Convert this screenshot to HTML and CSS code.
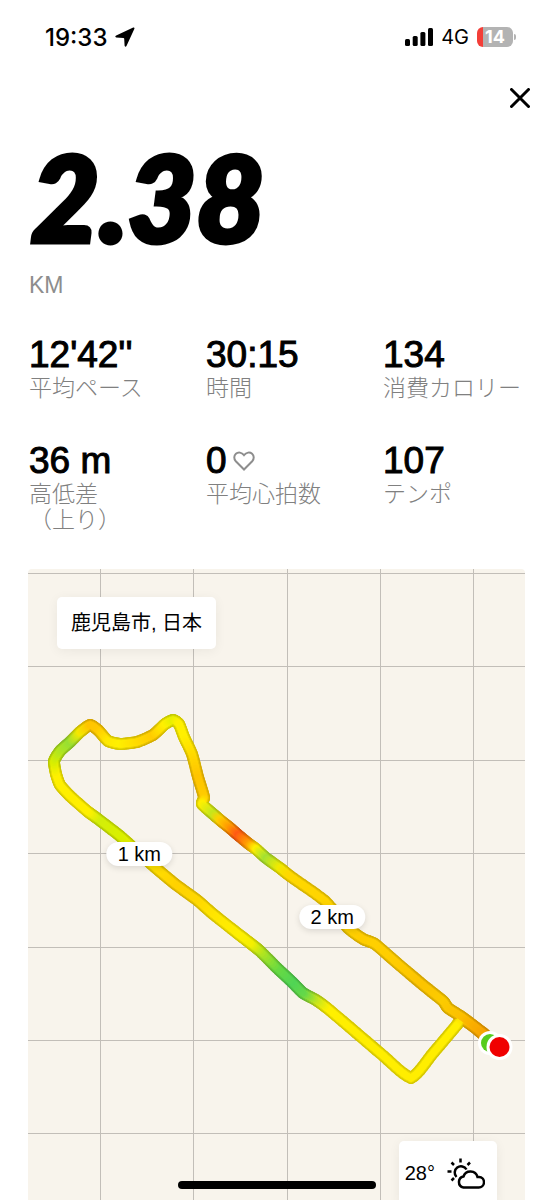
FILE: index.html
```html
<!DOCTYPE html>
<html lang="ja">
<head>
  <meta charset="UTF-8">
  <meta name="viewport" content="width=device-width, initial-scale=1.0">
  <title>2.38 KM</title>
  <link rel="stylesheet" href="styles.css">
</head>
<body>

  <div class="status-bar">
    <div class="status-group">
      <span class="clock">19:33</span>
      <svg class="location" viewBox="0 0 20 20" width="20" height="20" aria-hidden="true">
        <path d="M18.2 0.6 L1.2 8.4 Q-0.6 9.6 1.2 10.6 L8.4 11 Q9.200 11.1 9.200 11.8 L9.6 18.8 Q10.4 20.6 11.6 18.8 L19.4 1.8 Q19.8 0.2 18.2 0.6 Z"/>
      </svg>
    </div>
    <div class="status-group">
      <svg viewBox="0 0 28 18" width="28" height="18" aria-hidden="true">
        <rect x="0" y="11" width="5" height="7" rx="1.5"/>
        <rect x="7.700" y="8" width="5" height="10" rx="1.5"/>
        <rect x="15.400" y="4" width="5" height="14" rx="1.5"/>
        <rect x="23" y="0" width="5" height="18" rx="1.5"/>
      </svg>
      <span class="network">4G</span>
      <span class="battery">14</span>
    </div>
  </div>

  <header class="top-bar">
    <button class="close" aria-label="閉じる">
      <svg viewBox="0 0 20 20" width="20" height="20" aria-hidden="true">
        <path d="M1.500 1.500 L18.500 18.500 M18.500 1.500 L1.500 18.500"/>
      </svg>
    </button>
  </header>

  <main>
    <h1 class="distance">2.38</h1>
    <p class="unit">KM</p>

    <dl class="stats">
      <div class="stat">
        <dd>12'42''</dd>
        <dt>平均ペース</dt>
      </div>
      <div class="stat">
        <dd>30:15</dd>
        <dt>時間</dt>
      </div>
      <div class="stat">
        <dd>134</dd>
        <dt>消費カロリー</dt>
      </div>
      <div class="stat">
        <dd>36 m</dd>
        <dt>高低差<br>（上り）</dt>
      </div>
      <div class="stat">
        <dd>0
          <svg class="heart" viewBox="0 0 22 20" width="22" height="20" aria-hidden="true">
            <path d="M11 18.500 L2.800 10.200 C0.600 7.800 0.900 4.600 2.900 2.800 C5.200 0.800 8.600 1.200 11 4.200 C13.400 1.200 16.800 0.800 19.100 2.800 C21.100 4.600 21.400 7.800 19.200 10.200 Z"/>
          </svg>
        </dd>
        <dt>平均心拍数</dt>
      </div>
      <div class="stat">
        <dd>107</dd>
        <dt>テンポ</dt>
      </div>
    </dl>

    <section class="map" aria-label="ルート">
      <svg class="map-drawing" viewBox="28 569 497 631" aria-hidden="true">
        <path class="grid" d="M100.500 569V1200 M193.500 569V1200 M287.500 569V1200 M380.500 569V1200 M473.500 569V1200
          M28 573.500H525 M28 666.500H525 M28 760.500H525 M28 853.500H525 M28 947.500H525 M28 1040.500H525 M28 1133.500H525"/>
        <g id="route"></g>
        <circle cx="490" cy="1043" r="12" fill="#fff"/>
        <circle cx="490" cy="1043" r="9" fill="#57cc1d"/>
        <circle cx="499.500" cy="1047" r="13" fill="#fff"/>
        <circle cx="499.500" cy="1047" r="10" fill="#f00000"/>
      </svg>
      <span class="place">鹿児島市, 日本</span>
      <span class="marker marker-1">1 km</span>
      <span class="marker marker-2">2 km</span>
      <div class="weather">
        <span>28°</span>
        <svg viewBox="0 0 38 32" width="38" height="32" aria-hidden="true">
          <path d="M9.500 19 A6.300 6.300 0 1 1 19.500 11.500"/>
          <path d="M13.500 0.500V4.500 M23 4.500L20.500 7 M4.500 4.500L7 7 M0.500 13.500H4.500 M4.500 22.500L7 20"/>
          <path d="M16.500 29.500 H31.500 A5.200 5.200 0 0 0 32 19 H30.500 A7.300 7.300 0 0 0 16.500 18.500 A5.600 5.600 0 0 0 16.500 29.500 Z"/>
        </svg>
      </div>
    </section>
  </main>

  <div class="home-indicator"></div>

  <script src="route.js"></script>
</body>
</html>
```

FILE: styles.css
```css
* {
  box-sizing: border-box;
}

body {
  margin: 0;
  background-color: #fff;
  color: #000;
  font-family: "Liberation Sans", "Noto Sans CJK JP", sans-serif;
}

/* Status bar */
.status-bar {
  display: flex;
  justify-content: space-between;
  align-items: center;
  height: 74px;
  padding: 0 41px 0 45px;
  font-family: Inter, sans-serif;
}

.status-group {
  display: flex;
  align-items: center;
  gap: 8px;
}

.clock {
  font-size: 24px;
  font-weight: 500;
}

.network {
  font-size: 20px;
}

.battery {
  position: relative;
  width: 36px;
  height: 20px;
  border-radius: 6px;
  background: linear-gradient(to right, #f33e38 6px, #b3b3b3 6px);
  color: #fff;
  font-size: 18px;
  font-weight: 700;
  line-height: 20px;
  text-align: center;
}

.battery::after {
  content: "";
  position: absolute;
  top: 7px;
  right: -3px;
  width: 2px;
  height: 6px;
  border-radius: 0 2px 2px 0;
  background-color: #b3b3b3;
}

/* Close button */
.top-bar {
  display: flex;
  justify-content: flex-end;
  padding: 8px 18px 0 0;
}

.close {
  display: flex;
  align-items: center;
  justify-content: center;
  width: 32px;
  height: 32px;
  padding: 0;
  border: none;
  background: none;
  cursor: pointer;
}

.close path {
  fill: none;
  stroke: #000;
  stroke-width: 3;
  stroke-linecap: round;
}

/* Distance */
.distance {
  margin: 23px 29px 0 31px;
  font-family: Lato, sans-serif;
  font-size: 118px;
  font-style: italic;
  font-weight: 900;
  line-height: 120px;
  -webkit-text-stroke: 5px #000;
}

.unit {
  margin: 14px 29px 0;
  color: #8d8d8d;
  font-size: 23px;
  line-height: 28px;
}

/* Stats */
.stats {
  display: grid;
  grid-template-columns: repeat(3, 1fr);
  gap: 40px 6px;
  margin: 36px 0 36px;
  padding-left: 29px;
}

.stat {
  display: flex;
  flex-direction: column;
}

.stat dd {
  display: flex;
  align-items: center;
  gap: 6px;
  margin: 0;
  font-size: 37px;
  line-height: 40px;
  -webkit-text-stroke: 1px #000;
}

.stat dt {
  color: #808080;
  font-size: 23px;
  font-weight: 300;
  line-height: 26px;
}

.heart path {
  fill: none;
  stroke: #8d8d8d;
  stroke-width: 2;
}

/* Map */
.map {
  position: relative;
  margin: 0 29px 0 28px;
  overflow: hidden;
  border-radius: 4px 4px 0 0;
  background-color: #f8f4ec;
}

.map-drawing {
  display: block;
  width: 100%;
}

.grid {
  fill: none;
  stroke: #c2beb8;
  stroke-width: 1;
}

.place {
  position: absolute;
  top: 28px;
  left: 29px;
  padding: 12px 14px;
  border-radius: 5px;
  background-color: #fff;
  box-shadow: 0 2px 12px rgba(0, 0, 0, 0.06);
  font-size: 20px;
  line-height: 28px;
}

.marker {
  position: absolute;
  padding: 0 11px;
  border-radius: 12px;
  background-color: #fff;
  box-shadow: 0 2px 6px rgba(0, 0, 0, 0.12);
  font-size: 20px;
  line-height: 24px;
  transform: translate(-50%, -50%);
}

.marker-1 {
  top: 45.2%;
  left: 22.4%;
}

.marker-2 {
  top: 55.1%;
  left: 61.2%;
}

.weather {
  position: absolute;
  right: 28px;
  bottom: -6px;
  display: flex;
  align-items: center;
  gap: 12px;
  height: 65px;
  padding: 0 12px 0 6px;
  border-radius: 5px 5px 0 0;
  background-color: #fff;
  box-shadow: 0 2px 12px rgba(0, 0, 0, 0.06);
  font-size: 20px;
}

.weather path {
  fill: none;
  stroke: #000;
  stroke-width: 2.5;
}

.home-indicator {
  position: fixed;
  bottom: 11px;
  left: 50%;
  width: 198px;
  height: 8px;
  border-radius: 4px;
  background-color: #000;
  transform: translateX(-50%);
}
```

FILE: route.js
```js
// x, y and pace colour along the run
const points = [
  [485, 1036, '#f5a300'], [474, 1027, '#f8ab00'], [462, 1019, '#fccb00'], [456, 1026, '#fff000'],
  [434, 1052, '#ffee00'], [411, 1078, '#ffee00'], [380, 1053, '#ffee00'], [353, 1030, '#ffee00'],
  [327, 1008, '#fff000'], [316, 1000, '#c8e61e'], [303, 993, '#66d848'], [292, 982, '#50d455'],
  [277, 968, '#68d942'], [260, 951, '#b8e51c'], [250, 943, '#f4ef00'], [237, 933, '#fff000'],
  [213, 914, '#ffe600'], [197, 900, '#ffd800'], [175, 884, '#ffd200'], [157, 869, '#ffdc00'],
  [140, 854, '#f4ee00'], [120, 836, '#daf000'], [98, 819, '#d2ee0a'], [87, 811, '#fff000'],
  [70, 796, '#ffee00'], [60, 785, '#fff000'], [56, 774, '#fff000'], [54, 761, '#d8ee00'],
  [60, 751, '#b4e61e'], [70, 742, '#98df32'], [80, 732, '#f4e800'], [90, 725, '#ffc400'],
  [98, 730, '#ffc800'], [108, 741, '#ffe800'], [120, 744, '#fff000'], [137, 742, '#ffdc00'],
  [153, 735, '#ffcc00'], [165, 724, '#fff000'], [173, 720, '#e6f000'], [179, 724, '#fff000'],
  [184, 737, '#fff000'], [192, 754, '#ffdc00'], [198, 777, '#ffc400'], [204, 797, '#ffcc00'],
  [202, 804, '#fff000'], [213, 814, '#c4e61e'], [220, 820, '#ffd000'], [230, 828, '#ff9800'],
  [238, 835, '#ff5a14'], [249, 844, '#ffa000'], [256, 849, '#fff000'], [266, 858, '#a4e132'],
  [280, 868, '#f0ea00'], [290, 876, '#ffd800'], [325, 901, '#ffd400'], [348, 928, '#ffd400'],
  [363, 939, '#ffcc00'], [375, 944, '#ffd000'], [397, 963, '#ffcc00'], [423, 985, '#fcc400'],
  [443, 1001, '#fccc00'], [448, 1008, '#fcc800'], [462, 1017, '#fcc000'], [474, 1026, '#faae00'],
  [487, 1036, '#f5a000']
];

const STEPS = 8;
const TENSION = 0.25;

function rgb(hex) {
  return [1, 3, 5].map(i => parseInt(hex.substr(i, 2), 16));
}

function curve(a, b, c, d, t) {
  const m1 = (c - a) * TENSION + (c - b) * 0.5;
  const m2 = (d - b) * TENSION + (c - b) * 0.5;
  const t2 = t * t;
  const t3 = t2 * t;
  return (2 * t3 - 3 * t2 + 1) * b + (t3 - 2 * t2 + t) * m1 + (3 * t2 - 2 * t3) * c + (t3 - t2) * m2;
}

function addLine(group, from, to, width, shade) {
  const line = document.createElementNS('http://www.w3.org/2000/svg', 'line');
  line.setAttribute('x1', from.x);
  line.setAttribute('y1', from.y);
  line.setAttribute('x2', to.x);
  line.setAttribute('y2', to.y);
  line.setAttribute('stroke', 'rgb(' + from.color.map(v => Math.round(v * shade)) + ')');
  line.setAttribute('stroke-width', width);
  line.setAttribute('stroke-linecap', 'round');
  group.appendChild(line);
}

const path = [];
for (let i = 0; i < points.length - 1; i++) {
  const a = points[Math.max(i - 1, 0)];
  const b = points[i];
  const c = points[i + 1];
  const d = points[Math.min(i + 2, points.length - 1)];
  const start = rgb(b[2]);
  const end = rgb(c[2]);
  for (let s = 0; s < STEPS; s++) {
    const t = s / STEPS;
    path.push({
      x: curve(a[0], b[0], c[0], d[0], t),
      y: curve(a[1], b[1], c[1], d[1], t),
      color: start.map((v, k) => v + (end[k] - v) * t)
    });
  }
}

const route = document.getElementById('route');
[[12, 0.84], [9, 0.93], [7, 1]].forEach(([width, shade]) => {
  for (let i = 0; i < path.length - 1; i++) {
    addLine(route, path[i], path[i + 1], width, shade);
  }
});
```
